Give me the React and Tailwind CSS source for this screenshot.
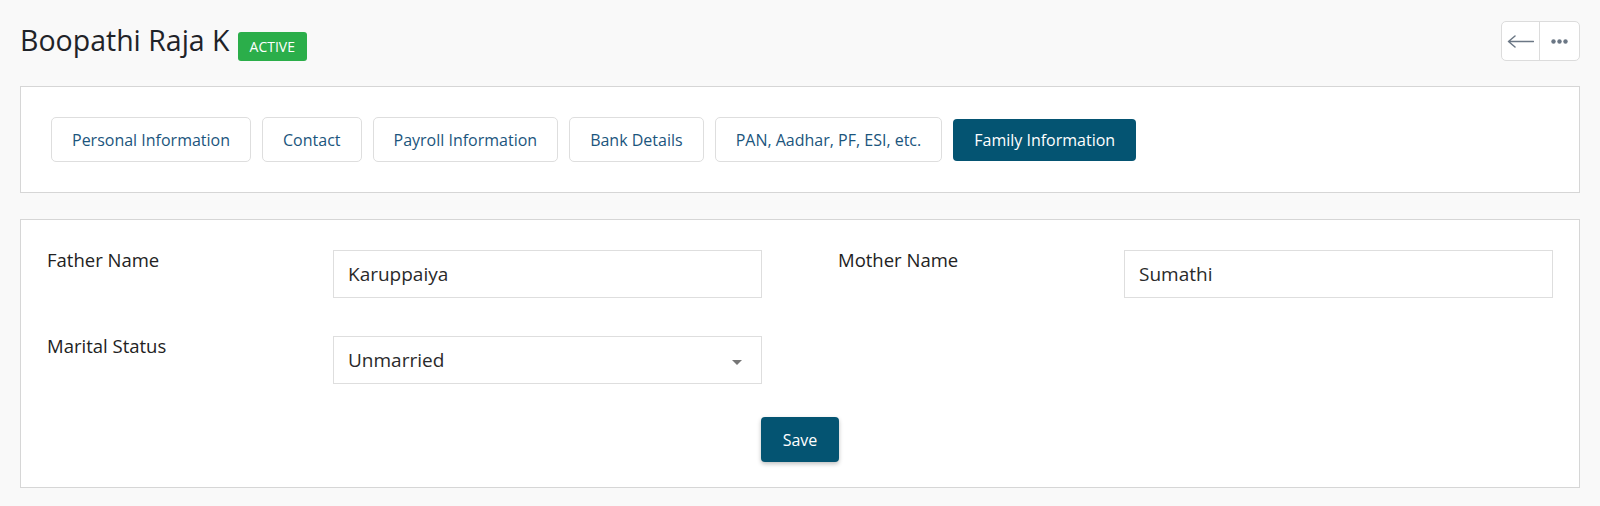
import { useState } from 'react';

const tabs = [
  'Personal Information',
  'Contact',
  'Payroll Information',
  'Bank Details',
  'PAN, Aadhar, PF, ESI, etc.',
  'Family Information',
];

function ArrowLeft() {
  return (
    <svg width="27" height="13" viewBox="0 0 27 13" fill="none">
      <path d="M1.5 6.5H26.5M8 1L1.5 6.5L8 12" stroke="#6b7785" strokeWidth="1.5" strokeLinecap="round" strokeLinejoin="round" />
    </svg>
  );
}

function Dots() {
  return (
    <svg width="17" height="5" viewBox="0 0 17 5" fill="#6b7785">
      <circle cx="2.5" cy="2.5" r="2.2" />
      <circle cx="8.5" cy="2.5" r="2.2" />
      <circle cx="14.5" cy="2.5" r="2.2" />
    </svg>
  );
}

function Field({ label, children }) {
  return (
    <div className="grid grid-cols-[286px_1fr] items-start">
      <label className="text-[18.5px] leading-none text-[#222] pt-[1px]">{label}</label>
      {children}
    </div>
  );
}

export default function App() {
  const [active, setActive] = useState('Family Information');
  const [father, setFather] = useState('Karuppaiya');
  const [mother, setMother] = useState('Sumathi');
  const [marital, setMarital] = useState('Unmarried');

  return (
    <div className="min-h-screen bg-[#f9f9f9] px-[20px] pt-[21px] pb-[18px] [font-family:'Open_Sans',sans-serif]">
      {/* header */}
      <div className="flex justify-between items-start mb-[25px]">
        <div className="flex items-start gap-[8px] pt-[2px]">
          <h1 className="text-[28.5px] leading-[34px] text-[#1f2328] font-normal">Boopathi Raja K</h1>
          <span className="mt-[9px] h-[29px] px-[12px] flex items-center rounded-[3px] bg-[#2bae4a] text-white text-[14px] leading-none">
            ACTIVE
          </span>
        </div>
        <div className="flex h-[40px] border border-[#dcdcdc] rounded-[5px] bg-white">
          <button className="w-[38px] flex items-center justify-center border-r border-[#dcdcdc]">
            <ArrowLeft />
          </button>
          <button className="w-[39px] flex items-center justify-center">
            <Dots />
          </button>
        </div>
      </div>

      {/* tabs */}
      <div className="bg-white border border-[#d6d6d6] px-[30px] py-[30px]">
        <div className="flex items-center gap-[11px] h-[45px]">
          {tabs.map((t) =>
            t === active ? (
              <button
                key={t}
                onClick={() => setActive(t)}
                className="h-[42px] px-[21px] rounded-[4px] bg-[#045472] text-white text-[16px]"
              >
                {t}
              </button>
            ) : (
              <button
                key={t}
                onClick={() => setActive(t)}
                className="h-[45px] px-[20px] rounded-[5px] border border-[#dedede] bg-white text-[#1b557d] text-[16px]"
              >
                {t}
              </button>
            )
          )}
        </div>
      </div>

      {/* family form */}
      <div className="mt-[26px] bg-white border border-[#d6d6d6] px-[26px] pt-[30px] pb-[25px]">
        <div className="grid grid-cols-2 gap-x-[76px] gap-y-[38px]">
          <Field label="Father Name">
            <input
              value={father}
              onChange={(e) => setFather(e.target.value)}
              className="h-[48px] w-full border border-[#dedede] px-[14px] text-[19px] text-[#2a2a2a] outline-none"
            />
          </Field>
          <Field label="Mother Name">
            <input
              value={mother}
              onChange={(e) => setMother(e.target.value)}
              className="h-[48px] w-full border border-[#dedede] px-[14px] text-[19px] text-[#2a2a2a] outline-none"
            />
          </Field>
          <Field label="Marital Status">
            <div className="relative">
              <select
                value={marital}
                onChange={(e) => setMarital(e.target.value)}
                className="appearance-none h-[48px] w-full border border-[#dedede] bg-white px-[14px] text-[19px] text-[#2a2a2a] outline-none"
              >
                <option>Unmarried</option>
                <option>Married</option>
              </select>
              <svg className="absolute right-[20px] top-[24px] pointer-events-none" width="10" height="5" viewBox="0 0 10 5">
                <path d="M0 0H10L5 5Z" fill="#767676" />
              </svg>
            </div>
          </Field>
        </div>
        <div className="flex justify-center mt-[33px]">
          <button className="h-[45px] px-[22px] rounded-[4px] bg-[#045472] text-white text-[16px] shadow-[0_2px_4px_rgba(0,0,0,0.25)]">
            Save
          </button>
        </div>
      </div>
    </div>
  );
}
